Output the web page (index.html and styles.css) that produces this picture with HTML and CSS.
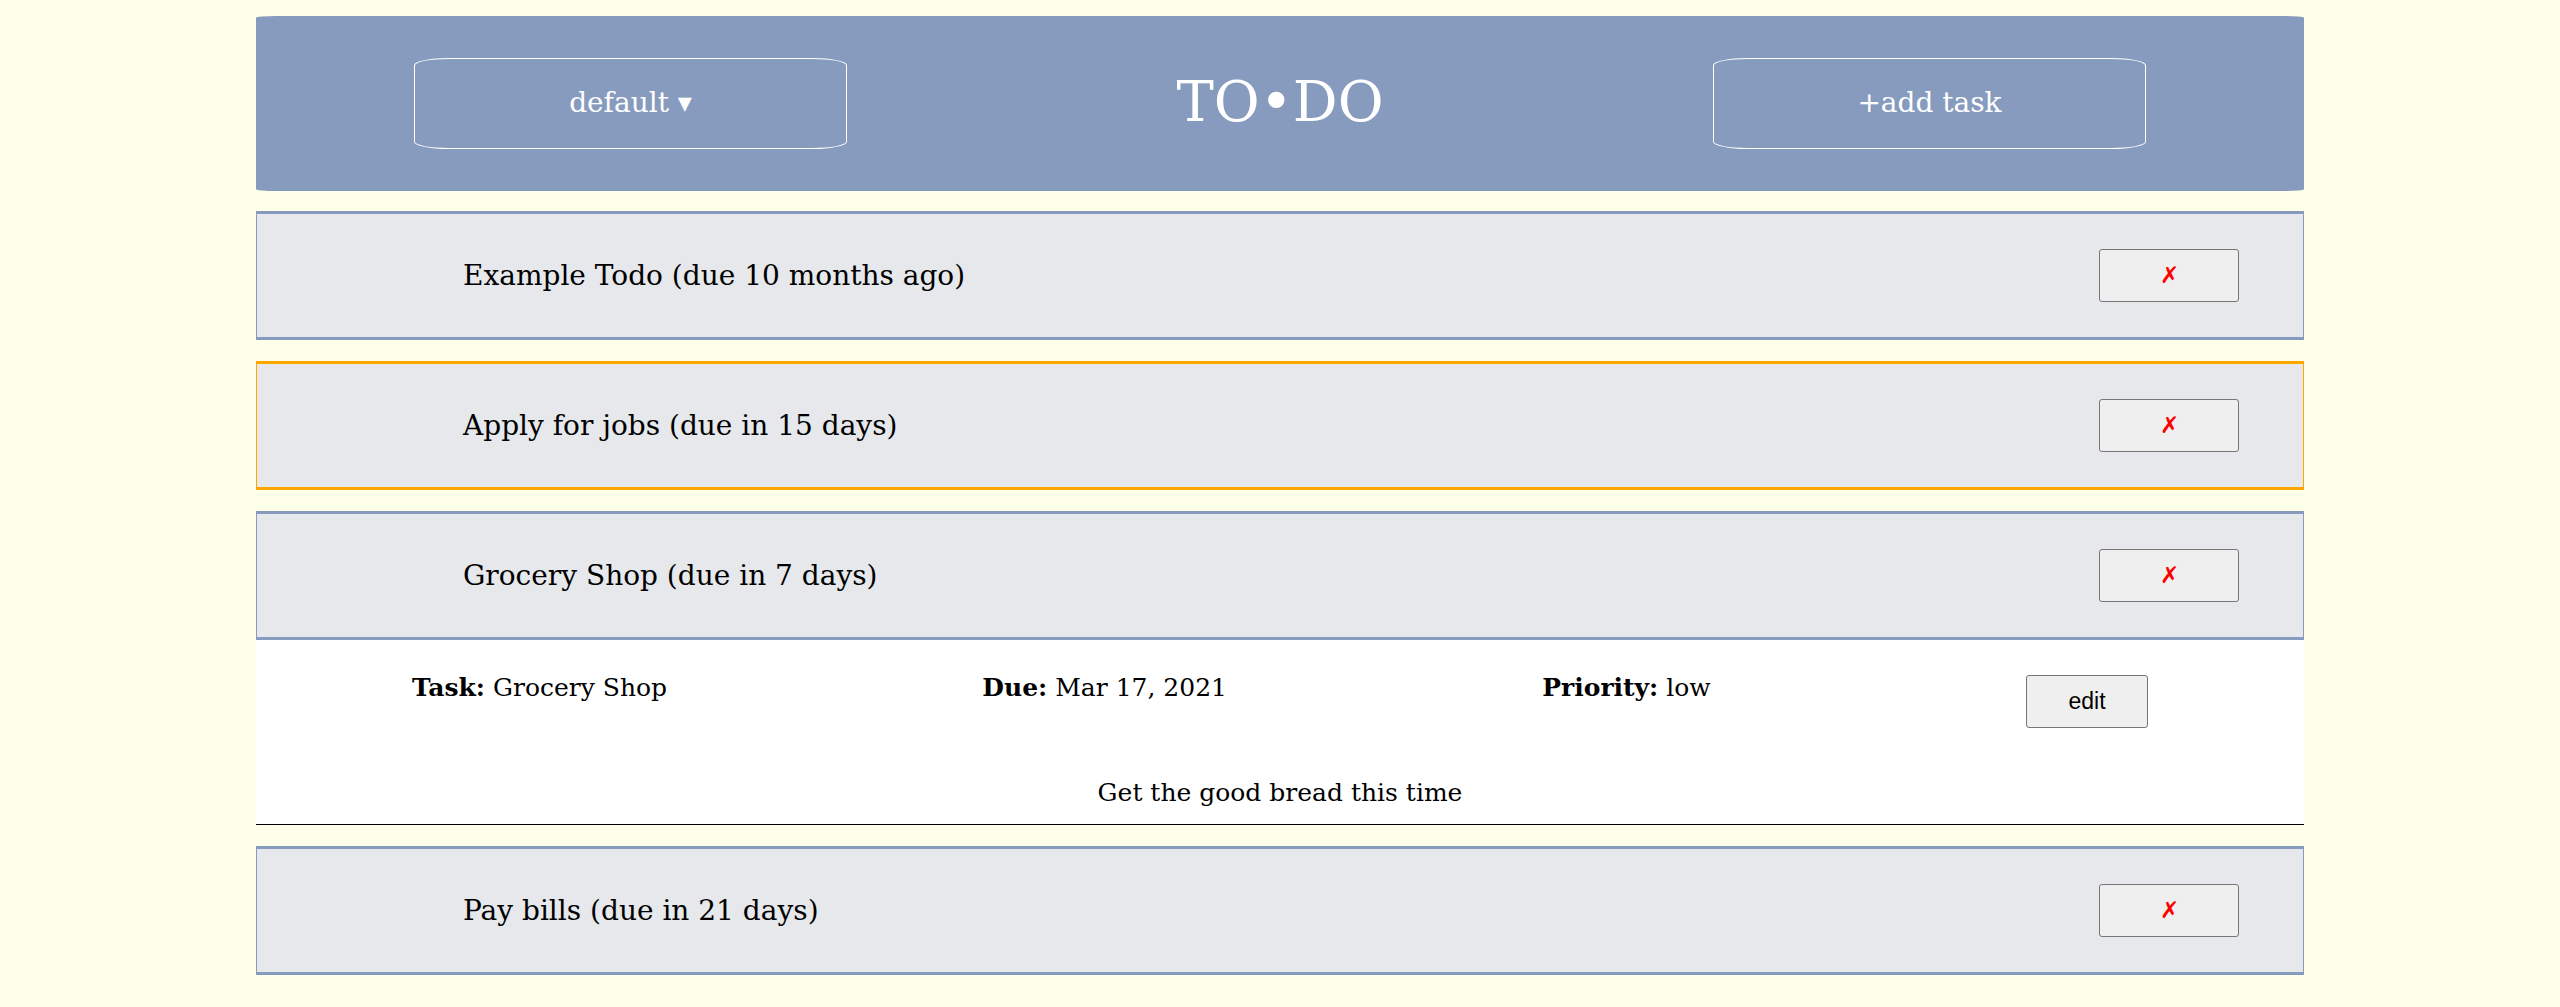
FILE: index.html
```html
<!DOCTYPE html>
<html lang="en">
<head>
<meta charset="utf-8">
<meta name="viewport" content="width=device-width, initial-scale=1">
<title>TO•DO</title>
<link rel="stylesheet" href="styles.css">
</head>
<body>
<div class="app">
  <header class="header">
    <button class="header-button" type="button">default ▾</button>
    <h1 class="title">TO•DO</h1>
    <button class="header-button" type="button">+add task</button>
  </header>
  <main class="todos">
    <article class="todo">
      <div class="todo-bar">
        <h2 class="todo-name">Example Todo (due 10 months ago)</h2>
        <button class="button delete" type="button">✗</button>
      </div>
    </article>
    <article class="todo">
      <div class="todo-bar medium">
        <h2 class="todo-name">Apply for jobs (due in 15 days)</h2>
        <button class="button delete" type="button">✗</button>
      </div>
    </article>
    <article class="todo">
      <div class="todo-bar">
        <h2 class="todo-name">Grocery Shop (due in 7 days)</h2>
        <button class="button delete" type="button">✗</button>
      </div>
      <div class="details">
        <div class="facts">
          <p class="fact"><strong>Task:</strong> Grocery Shop</p>
          <p class="fact"><strong>Due:</strong> Mar 17, 2021</p>
          <p class="fact"><strong>Priority:</strong> low</p>
          <button class="button edit" type="button">edit</button>
        </div>
        <p class="notes">Get the good bread this time</p>
      </div>
    </article>
    <article class="todo">
      <div class="todo-bar">
        <h2 class="todo-name">Pay bills (due in 21 days)</h2>
        <button class="button delete" type="button">✗</button>
      </div>
    </article>
  </main>
</div>
</body>
</html>
```
FILE: styles.css
```css
* {
  box-sizing: border-box;
}

body {
  margin: 0;
  background: #feffe8;
  color: #000;
  font-family: "DejaVu Serif", serif;
}

h1, h2, p {
  margin: 0;
  font-weight: normal;
}

.app {
  width: 80%;
  margin: 0 auto;
  padding: 16px 0 32px;
}

.header {
  display: flex;
  align-items: center;
  justify-content: space-between;
  margin-bottom: 20px;
  padding: 42px 158px;
  border-radius: 1%;
  background: #879bbf;
  color: #fff;
}

.header-button {
  width: 25%;
  padding: 27px 0 29px;
  border: 1px solid #fff;
  border-radius: 8%;
  background: transparent;
  color: inherit;
  font-family: inherit;
  font-size: 28px;
  line-height: 33px;
}

.title {
  padding-bottom: 3px;
  font-size: 56px;
  line-height: 66px;
}

.todos {
  display: grid;
  gap: 21px;
}

.todo-bar {
  display: flex;
  align-items: center;
  justify-content: space-between;
  padding: 35px 64px 35px 206px;
  border: 1px solid #879bbf;
  border-width: 3px 1px;
  background: #e6e8ec;
}

.todo-bar.medium {
  border-color: #ffa500;
}

.todo-name {
  font-size: 28px;
  line-height: 33px;
}

.button {
  height: 53px;
  border: 1px solid #767676;
  border-radius: 3px;
  background: #efefef;
  color: #000;
  font-family: "Liberation Sans", Arial, sans-serif;
  font-size: 23px;
}

.delete {
  width: 140px;
  color: #f00;
}

.edit {
  width: 122px;
}

.details {
  padding: 35px 156px 18px;
  border-bottom: 1px solid #000;
  background: #fff;
}

.facts {
  display: flex;
  align-items: flex-start;
  justify-content: space-between;
  margin-bottom: 52px;
}

.fact, .notes {
  font-size: 25px;
  line-height: 26px;
}

.fact strong {
  font-weight: bold;
}

.notes {
  text-align: center;
}
```
